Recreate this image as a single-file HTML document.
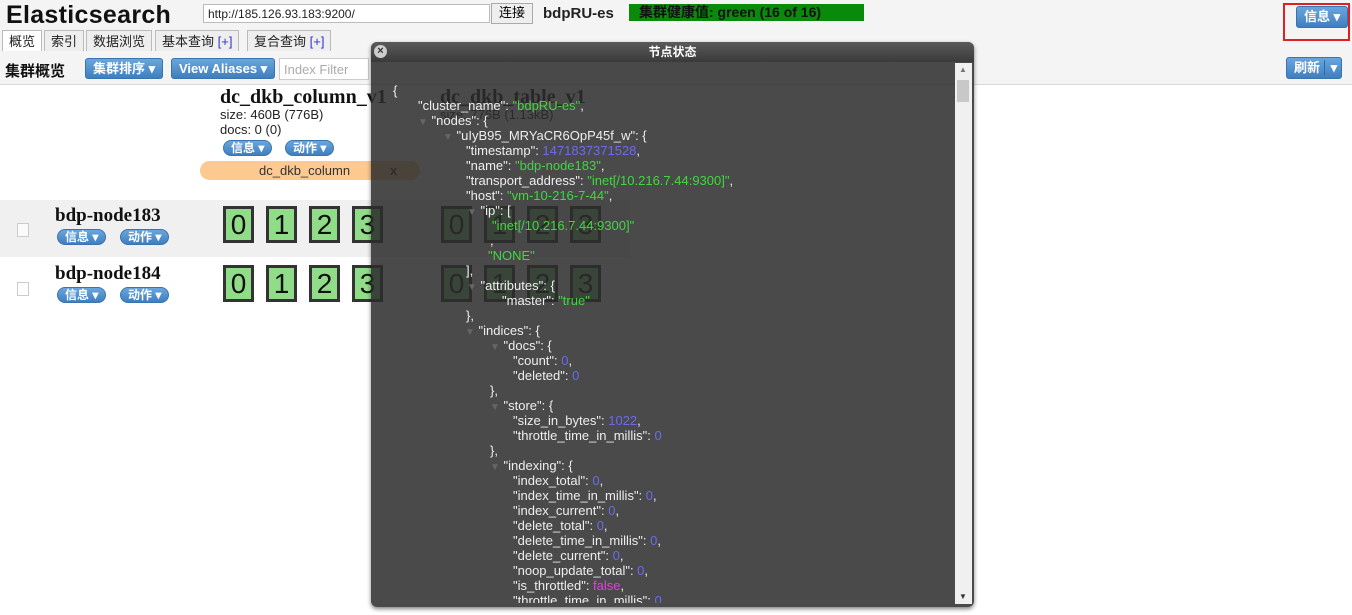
<!DOCTYPE html>
<html><head><meta charset="utf-8"><style>
*{margin:0;padding:0;box-sizing:border-box}
body{width:1352px;height:615px;overflow:hidden;background:#fff;font-family:"Liberation Sans","Noto Sans CJK SC",sans-serif;position:relative}
.a{position:absolute;white-space:nowrap}
.hdr{position:absolute;left:0;top:0;width:1352px;height:85px;background:#f4f4f4;border-bottom:1px solid #d8d8d8}
.tab{position:absolute;top:30px;height:21px;border:1px solid #bbb;border-bottom:none;background:#eee;font-size:13px;padding:2px 6px 0;color:#222;line-height:17px}
.btn{position:absolute;height:21px;border-radius:3px;background:linear-gradient(#6aa6dc,#3f7fc0);color:#fff;font-weight:bold;font-size:13px;padding:0 7px;line-height:19px;border:1px solid #3a74ae}
.pill{position:absolute;height:16px;border-radius:9px;background:linear-gradient(#6aa6dc,#3f7fc0);color:#fff;font-weight:bold;font-size:12px;padding:0 7px;line-height:14px;border:1px solid #3a74ae}
.sh{position:absolute;width:31px;height:37px;background:#90dc88;border:3px solid #333;font-size:28px;text-align:center;line-height:31px;color:#111}
.j{position:absolute;white-space:nowrap;font-size:13px;color:#eee;line-height:15px;font-family:"Liberation Sans",sans-serif}
.s{color:#3fd83f}.n{color:#6b6bf0}.f{color:#e040e0}
.ar{color:#666;font-size:10px}
</style></head><body>
<div class="hdr"></div>
<div class="a" style="left:6px;top:1px;font-size:25px;font-weight:bold;color:#111;letter-spacing:0.3px">Elasticsearch</div>
<div class="a" style="left:203px;top:4px;width:287px;height:19px;background:#fff;border:1px solid #bbb;font-size:12px;padding:2px 4px;color:#222">http://185.126.93.183:9200/</div>
<div class="a" style="left:491px;top:3px;width:42px;height:21px;background:#eee;border:1px solid #aaa;font-size:13px;text-align:center;line-height:18px">连接</div>
<div class="a" style="left:543px;top:5px;font-size:15px;font-weight:bold;color:#222">bdpRU-es</div>
<div class="a" style="left:629px;top:4px;width:235px;height:17px;background:#0a8a0a;font-size:14px;font-weight:bold;color:#111;padding-left:10px;line-height:17px">集群健康值: green (16 of 16)</div>
<div class="tab" style="left:2px;background:#fff">概览</div>
<div class="tab" style="left:44px">索引</div>
<div class="tab" style="left:86px">数据浏览</div>
<div class="tab" style="left:155px">基本查询 <span style="color:#33c">[+]</span></div>
<div class="tab" style="left:247px">复合查询 <span style="color:#33c">[+]</span></div>
<div class="a" style="left:5px;top:60px;font-size:15px;font-weight:bold;color:#111">集群概览</div>
<div class="btn" style="left:85px;top:58px">集群排序 ▾</div>
<div class="btn" style="left:171px;top:58px">View Aliases ▾</div>
<div class="a" style="left:279px;top:58px;width:90px;height:22px;background:#fff;border:1px solid #ccc;font-size:13px;color:#aaa;padding:3px 4px">Index Filter</div>
<div class="a" style="left:1283px;top:3px;width:67px;height:38px;border:2px solid #e02020"></div>
<div class="btn" style="left:1296px;top:6px;height:22px">信息 ▾</div>
<div class="btn" style="left:1286px;top:57px;height:22px;padding-right:4px">刷新 <span style="border-left:1px solid #2d6aa5;padding-left:6px">▾</span></div>

<div class="a" style="left:220px;top:86px;font-family:'Liberation Serif',serif;font-size:20px;font-weight:bold;color:#111">dc_dkb_column_v1</div>
<div class="a" style="left:220px;top:107px;font-size:13px;color:#222;line-height:15px">size: 460B (776B)<br>docs: 0 (0)</div>
<div class="pill" style="left:223px;top:140px">信息 ▾</div>
<div class="pill" style="left:285px;top:140px">动作 ▾</div>
<div class="a" style="left:200px;top:161px;width:220px;height:19px;background:#fcc990;border-radius:10px;font-size:13px;color:#333;line-height:19px;padding-left:59px">dc_dkb_column<span style="position:absolute;left:190px;font-weight:bold">x</span></div>
<div class="a" style="left:440px;top:86px;font-family:'Liberation Serif',serif;font-size:20px;font-weight:bold;color:#111">dc_dkb_table_v1</div>
<div class="a" style="left:440px;top:107px;font-size:13px;color:#222">size: 776B (1.13kB)</div>
<div class="a" style="left:0;top:200px;width:630px;height:57px;background:#f0f0f0"></div>
<div class="a" style="left:17px;top:223px;width:12px;height:14px;border:1px solid #ccc;background:#fafafa"></div>
<div class="a" style="left:17px;top:282px;width:12px;height:14px;border:1px solid #ccc;background:#fff"></div>
<div class="a" style="left:55px;top:205px;font-family:'Liberation Serif',serif;font-size:19px;font-weight:bold;color:#111">bdp-node183</div>
<div class="a" style="left:55px;top:263px;font-family:'Liberation Serif',serif;font-size:19px;font-weight:bold;color:#111">bdp-node184</div>
<div class="pill" style="left:57px;top:229px">信息 ▾</div><div class="pill" style="left:120px;top:229px">动作 ▾</div>
<div class="pill" style="left:57px;top:287px">信息 ▾</div><div class="pill" style="left:120px;top:287px">动作 ▾</div>
<div class="sh" style="left:223px;top:206px">0</div><div class="sh" style="left:266px;top:206px">1</div><div class="sh" style="left:309px;top:206px">2</div><div class="sh" style="left:352px;top:206px">3</div>
<div class="sh" style="left:441px;top:206px">0</div><div class="sh" style="left:484px;top:206px">1</div><div class="sh" style="left:527px;top:206px">2</div><div class="sh" style="left:570px;top:206px">3</div>
<div class="sh" style="left:223px;top:265px">0</div><div class="sh" style="left:266px;top:265px">1</div><div class="sh" style="left:309px;top:265px">2</div><div class="sh" style="left:352px;top:265px">3</div>
<div class="sh" style="left:441px;top:265px">0</div><div class="sh" style="left:484px;top:265px">1</div><div class="sh" style="left:527px;top:265px">2</div><div class="sh" style="left:570px;top:265px">3</div>

<!-- modal -->
<div class="a" style="left:371px;top:42px;width:603px;height:565px;background:rgba(44,44,44,0.86);border-radius:6px;box-shadow:0 2px 4px rgba(0,0,0,.5)"></div>
<div class="a" style="left:371px;top:42px;width:603px;height:20px;background:linear-gradient(#5a5a5a,#3a3a3a);border-radius:6px 6px 0 0;color:#fff;font-size:12px;font-weight:bold;text-align:center;line-height:20px">节点状态</div>
<div class="a" style="left:374px;top:45px;width:13px;height:13px;border-radius:50%;background:#ccc;color:#333;font-size:11px;line-height:13px;text-align:center;font-weight:bold">×</div>
<div class="a" style="left:955px;top:63px;width:17px;height:541px;background:#f0f0f0"></div>
<div class="a" style="left:957px;top:80px;width:12px;height:22px;background:#c8c8c8"></div>
<div class="a" style="left:959px;top:65px;font-size:8px;color:#777">▲</div>
<div class="a" style="left:959px;top:592px;font-size:8px;color:#333">▼</div>

<div class="j" style="left:393px;top:83px">{</div>
<div class="j" style="left:418px;top:98px">"cluster_name": <span class="s">"bdpRU-es"</span>,</div>
<div class="j" style="left:418px;top:113px"><span class="ar">▼</span> "nodes": {</div>
<div class="j" style="left:443px;top:128px"><span class="ar">▼</span> "uIyB95_MRYaCR6OpP45f_w": {</div>
<div class="j" style="left:466px;top:143px">"timestamp": <span class="n">1471837371528</span>,</div>
<div class="j" style="left:466px;top:158px">"name": <span class="s">"bdp-node183"</span>,</div>
<div class="j" style="left:466px;top:173px">"transport_address": <span class="s">"inet[/10.216.7.44:9300]"</span>,</div>
<div class="j" style="left:466px;top:188px">"host": <span class="s">"vm-10-216-7-44"</span>,</div>
<div class="j" style="left:467px;top:203px"><span class="ar">▼</span> "ip": [</div>
<div class="j" style="left:492px;top:218px"><span class="s">"inet[/10.216.7.44:9300]"</span></div>
<div class="j" style="left:490px;top:233px">,</div>
<div class="j" style="left:488px;top:248px"><span class="s">"NONE"</span></div>
<div class="j" style="left:466px;top:263px">],</div>
<div class="j" style="left:467px;top:278px"><span class="ar">▼</span> "attributes": {</div>
<div class="j" style="left:502px;top:293px">"master": <span class="s">"true"</span></div>
<div class="j" style="left:466px;top:308px">},</div>
<div class="j" style="left:465px;top:323px"><span class="ar">▼</span> "indices": {</div>
<div class="j" style="left:490px;top:338px"><span class="ar">▼</span> "docs": {</div>
<div class="j" style="left:513px;top:353px">"count": <span class="n">0</span>,</div>
<div class="j" style="left:513px;top:368px">"deleted": <span class="n">0</span></div>
<div class="j" style="left:490px;top:383px">},</div>
<div class="j" style="left:490px;top:398px"><span class="ar">▼</span> "store": {</div>
<div class="j" style="left:513px;top:413px">"size_in_bytes": <span class="n">1022</span>,</div>
<div class="j" style="left:513px;top:428px">"throttle_time_in_millis": <span class="n">0</span></div>
<div class="j" style="left:490px;top:443px">},</div>
<div class="j" style="left:490px;top:458px"><span class="ar">▼</span> "indexing": {</div>
<div class="j" style="left:513px;top:473px">"index_total": <span class="n">0</span>,</div>
<div class="j" style="left:513px;top:488px">"index_time_in_millis": <span class="n">0</span>,</div>
<div class="j" style="left:513px;top:503px">"index_current": <span class="n">0</span>,</div>
<div class="j" style="left:513px;top:518px">"delete_total": <span class="n">0</span>,</div>
<div class="j" style="left:513px;top:533px">"delete_time_in_millis": <span class="n">0</span>,</div>
<div class="j" style="left:513px;top:548px">"delete_current": <span class="n">0</span>,</div>
<div class="j" style="left:513px;top:563px">"noop_update_total": <span class="n">0</span>,</div>
<div class="j" style="left:513px;top:578px">"is_throttled": <span class="f">false</span>,</div>
<div class="j" style="left:513px;top:593px;height:10px;overflow:hidden">"throttle_time_in_millis": <span class="n">0</span></div>
</body></html>
